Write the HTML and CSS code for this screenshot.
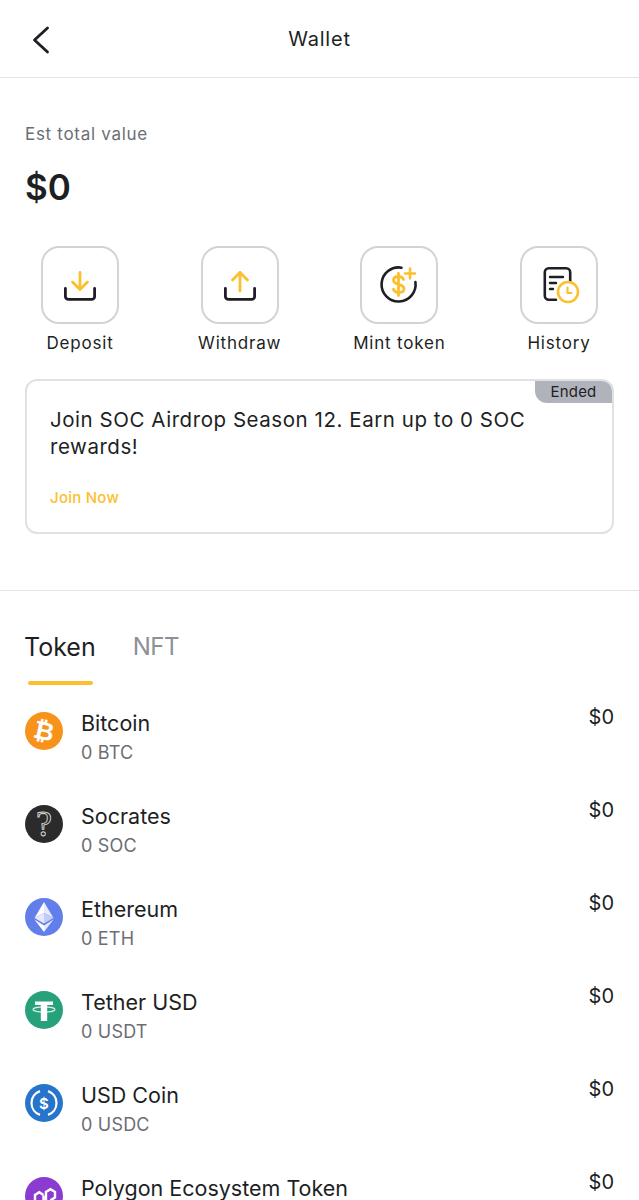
FILE: index.html
```html
<!DOCTYPE html>
<html lang="en">
<head>
<meta charset="utf-8">
<title>Wallet</title>
<link rel="stylesheet" href="styles.css">
</head>
<body>
<div class="page">
<header class="header">
  <svg class="back" width="18" height="28" viewBox="0 0 18 28"><path d="M15.5 2 2.500 14 15.500 26" fill="none" stroke="#1d1f24" stroke-width="2.800" stroke-linecap="round" stroke-linejoin="round"/></svg>
  <h1 class="title">Wallet</h1>
</header>
<section class="summary">
  <div class="est">Est total value</div>
  <div class="total">$0</div>
  <div class="actions">
    <div class="action">
      <div class="action-box"><svg width="40" height="40" viewBox="0 0 40 40"><path d="M20 7.400V24.600M12.500 17l7.500 7.600 7.500-7.600" fill="none" stroke="#fcc02e" stroke-width="2.800" stroke-linecap="round" stroke-linejoin="round"/><path d="M5.400 23.400v8a3 3 0 0 0 3 3h23.200a3 3 0 0 0 3-3v-8" fill="none" stroke="#1d1f24" stroke-width="2.800" stroke-linecap="round"/></svg></div>
      <span class="action-label">Deposit</span>
    </div>
    <div class="action">
      <div class="action-box"><svg width="40" height="40" viewBox="0 0 40 40"><path d="M20 26V7.400M12.500 15 20 7.400 27.500 15" fill="none" stroke="#fcc02e" stroke-width="2.800" stroke-linecap="round" stroke-linejoin="round"/><path d="M5.400 23.400v8a3 3 0 0 0 3 3h23.200a3 3 0 0 0 3-3v-8" fill="none" stroke="#1d1f24" stroke-width="2.800" stroke-linecap="round"/></svg></div>
      <span class="action-label">Withdraw</span>
    </div>
    <div class="action">
      <div class="action-box"><svg width="44" height="44" viewBox="0 0 44 44"><path d="M24.500 4.700A17 17 0 1 0 38.400 19" fill="none" stroke="#1d1f24" stroke-width="2.600" stroke-linecap="round"/><path d="M33 5.500v10M28 10.500h10" stroke="#fcc02e" stroke-width="2.600" stroke-linecap="round"/><path d="M26.500 16.500c-.7-2-2.500-3-5-3-3 0-5 1.400-5 3.800 0 5.200 10.500 3 10.500 8.400 0 2.400-2.200 3.800-5.300 3.800-2.700 0-4.600-1.200-5.300-3.200M21.500 10.500v22" fill="none" stroke="#fcc02e" stroke-width="2.800" stroke-linecap="round"/></svg></div>
      <span class="action-label">Mint token</span>
    </div>
    <div class="action">
      <div class="action-box"><svg width="44" height="44" viewBox="0 0 44 44"><path d="M19 36.700h-7.200a4 4 0 0 1-4-4V9.300a4 4 0 0 1 4-4h17.400a4 4 0 0 1 4 4v9" fill="none" stroke="#1d1f24" stroke-width="2.600" stroke-linecap="round"/><path d="M13 14h13M13 20h6M13 26h3" stroke="#1d1f24" stroke-width="2.400" stroke-linecap="round"/><circle cx="31" cy="29" r="10" fill="#fff" stroke="#fcc02e" stroke-width="2.600"/><path d="M30.500 24.500V30H34.500" fill="none" stroke="#fcc02e" stroke-width="2.200" stroke-linecap="round" stroke-linejoin="round"/></svg></div>
      <span class="action-label">History</span>
    </div>
  </div>
  <article class="promo">
    <span class="badge">Ended</span>
    <p class="promo-text">Join SOC Airdrop Season 12. Earn up to 0 SOC rewards!</p>
    <a class="promo-link">Join Now</a>
  </article>
</section>
<section class="assets">
  <div class="tabs">
    <div class="tab tab-active">Token</div>
    <div class="tab">NFT</div>
  </div>
  <ul class="list">
    <li class="row">
      <svg class="coin" viewBox="0 0 38 38"><circle cx="19" cy="19" r="19" fill="#f7931a"/><text x="19" y="27.500" text-anchor="middle" class="coin-glyph" transform="rotate(12 19 19)">₿</text></svg>
      <div class="info"><div class="name">Bitcoin</div><div class="amount">0 BTC</div></div>
      <div class="value">$0</div>
    </li>
    <li class="row">
      <svg class="coin" viewBox="0 0 38 38"><circle cx="19" cy="19" r="19" fill="#2b2b2b"/><text x="19" y="31" text-anchor="middle" class="coin-q">?</text></svg>
      <div class="info"><div class="name">Socrates</div><div class="amount">0 SOC</div></div>
      <div class="value">$0</div>
    </li>
    <li class="row">
      <svg class="coin" viewBox="0 0 38 38"><circle cx="19" cy="19" r="19" fill="#627eea"/><path d="M19 4v11l9.500 5z" fill="#e4e9fb"/><path d="M19 4 9.500 20l9.500-5z" fill="#fff"/><path d="M19 15v10.500l9.500-5.500z" fill="#c1ccf7"/><path d="M19 15 9.500 20l9.500 5.500z" fill="#e4e9fb"/><path d="M19 27.500V34l9.500-12.500z" fill="#e4e9fb"/><path d="M19 27.500V34L9.500 21.500z" fill="#fff"/></svg>
      <div class="info"><div class="name">Ethereum</div><div class="amount">0 ETH</div></div>
      <div class="value">$0</div>
    </li>
    <li class="row">
      <svg class="coin" viewBox="0 0 38 38"><circle cx="19" cy="19" r="19" fill="#26a17b"/><path d="M10 10.500h18v3.500h-5.800v16h-6.400V14H10z" fill="#fff"/><ellipse cx="19" cy="18.500" rx="11" ry="2.600" fill="none" stroke="#fff" stroke-width="1.200" opacity=".8"/></svg>
      <div class="info"><div class="name">Tether USD</div><div class="amount">0 USDT</div></div>
      <div class="value">$0</div>
    </li>
    <li class="row">
      <svg class="coin" viewBox="0 0 38 38"><circle cx="19" cy="19" r="19" fill="#2775ca"/><path d="M15 7.160a12.500 12.500 0 0 0 0 23.680M23 7.160a12.500 12.500 0 0 1 0 23.680" fill="none" stroke="#fff" stroke-width="2.200"/><text x="19" y="24.500" text-anchor="middle" class="coin-usd">$</text></svg>
      <div class="info"><div class="name">USD Coin</div><div class="amount">0 USDC</div></div>
      <div class="value">$0</div>
    </li>
    <li class="row">
      <svg class="coin" viewBox="0 0 38 38"><circle cx="19" cy="19" r="19" fill="#8c3bd0"/><path d="M21 24v-9l4.500-2.800 4.500 2.800v5.500l-4.500 2.800M18.500 18l-4.200-2.800L10 18v5.500l4.300 2.800 4.200-2.800v-5" fill="none" stroke="#fff" stroke-width="2.400"/></svg>
      <div class="info"><div class="name">Polygon Ecosystem Token</div></div>
      <div class="value">$0</div>
    </li>
  </ul>
</section>
</div>
</body>
</html>
```
FILE: styles.css
```css
* { box-sizing: border-box; }
html, body { margin: 0; padding: 0; background: #fff; height: 1200px; overflow: hidden; }
body { font-family: Inter, "Liberation Sans", sans-serif; color: #1d1f24; }
.page { width: 639px; height: 1200px; overflow: hidden; }
.header { height: 78px; border-bottom: 1px solid #e4e4e6; display: flex; align-items: center; justify-content: center; position: relative; }
.back { position: absolute; left: 32px; top: 26px; }
.title { font-size: 20px; font-weight: 400; letter-spacing: .8px; margin: 0; padding-bottom: 0; }
.summary { padding: 46px 25px 0; height: 513px; border-bottom: 1px solid #e4e4e6; }
.est { font-size: 17px; line-height: 20px; letter-spacing: .7px; color: #6b6e75; }
.total { font-size: 35px; font-weight: 600; line-height: 44px; margin-top: 21px; }
.actions { display: flex; justify-content: space-between; margin: 37px 0 0; }
.action { width: 110px; display: flex; flex-direction: column; align-items: center; }
.action-box { width: 78px; height: 78px; border: 2px solid #d2d3d8; border-radius: 18px; display: flex; align-items: center; justify-content: center; }
.action-label { font-size: 17px; line-height: 22px; letter-spacing: .8px; margin-top: 8px; white-space: nowrap; }
.promo { position: relative; margin-top: 25px; height: 155px; border: 2px solid #e0e1e4; border-radius: 12px; padding: 25px 23px 0; }
.badge { position: absolute; right: 0; top: 0; width: 77px; height: 22px; background: #b1b3bc; border-radius: 0 10px 0 12px; font-size: 15px; line-height: 22px; letter-spacing: .2px; text-align: center; }
.promo-text { margin: 0; font-size: 20.500px; line-height: 27px; letter-spacing: .55px; }
.promo-link { display: block; margin-top: 28px; font-size: 15px; line-height: 20px; letter-spacing: .25px; font-weight: 500; color: #fcc02e; }
.assets { padding: 0 25px; }
.tabs { display: flex; gap: 37px; height: 94px; padding-top: 39px; margin-left: -1px; }
.tab { font-size: 24px; line-height: 34px; letter-spacing: -.5px; color: #8d9097; position: relative; height: 55px; }
.tab-active { font-size: 25px; letter-spacing: 0; color: #1d1f24; }
.tab-active::after { content: ""; position: absolute; left: 4px; right: 3px; bottom: 0; height: 4px; border-radius: 2px; background: #fcc02e; }
.list { list-style: none; margin: 0; padding: 0; }
.row { display: flex; height: 93px; }
.coin { width: 38px; height: 38px; margin-top: 27px; flex: none; }
.info { margin-left: 18px; padding-top: 23px; flex: 1; }
.name { font-size: 21.500px; line-height: 30px; }
.amount { font-size: 18px; line-height: 24px; letter-spacing: .2px; color: #6b6e75; margin-top: 3px; }
.value { font-size: 20px; line-height: 28px; padding-top: 18px; }
.coin-glyph { font-family: "DejaVu Sans", sans-serif; font-size: 25px; font-weight: 700; fill: #fff; }
.coin-q { font-family: "Liberation Serif", serif; font-size: 36px; fill: #2b2b2b; stroke: #ddd; stroke-width: .9px; }
.coin-usd { font-family: Inter, sans-serif; font-size: 15px; font-weight: 600; fill: #fff; }
```
